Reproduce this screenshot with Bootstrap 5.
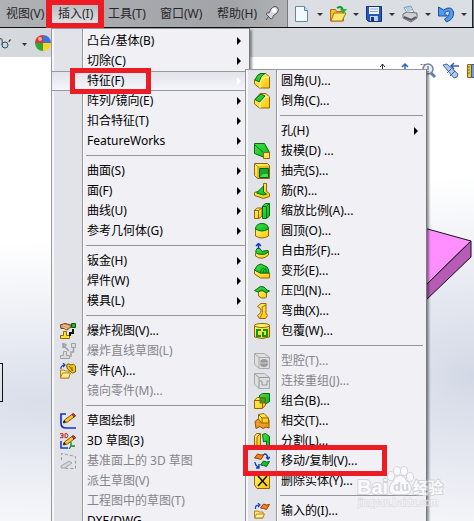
<!DOCTYPE html>
<html lang="zh-CN">
<head>
<meta charset="utf-8">
<meta name="viewport" content="width=device-width, initial-scale=1">
<title>插入 - 特征</title>
<link href="https://cdn.jsdelivr.net/npm/bootstrap@5.3.0/dist/css/bootstrap.min.css" rel="stylesheet">
<style>
body{font:12px/20px "Noto Sans","Noto Sans CJK SC",sans-serif;color:#000;background:#fff}
button{font:inherit;color:inherit}
.topbar{height:28px;background:#dbdee3;border-bottom:1px solid #111}
.menus{background:linear-gradient(90deg,#b0b1b5,#a2a3a7 80%,#b1b2b6);width:288px;height:27px;border-right:1px solid #77787c;color:#26262a}
.menus button{width:52px;height:27px;padding:0 0 0 6px;border:0;background:none;text-align:left;white-space:nowrap}
.menus .on{background:linear-gradient(#b9babe,#e2e3e7);height:20px;width:50px}
.menus .wide{width:57px}
.tool{width:36px;height:27px;border:0;background:none;padding:0}
.edge{width:3px}
.subbar{height:29px;background:#d5d8dc}
.view3d{background:radial-gradient(ellipse 400px 160px at 40px 345px,#d9deea,transparent),radial-gradient(ellipse 260px 200px at 100% 320px,#d3d8e6,transparent),#fff}
.view3d .tools{height:28px}
.model{right:0;top:168px}
.sheet{left:0;top:306px;width:3px;height:39px;border:1px solid #111;border-left:0}
.popup{background:linear-gradient(90deg,#f7f7fa 2px,#e2e3e8 2px,#e2e3e8 30px,#96979a 30px,#96979a 31px,#fff 31px,#fff 32px,#f1f0f5 32px);border:1px solid #96979b;border-right-color:#77787b;box-shadow:2px 2px 2px #0006;padding:2px 0}
.main-menu{left:51px;top:28px;width:199px}
.sub-menu{left:245px;top:69px;width:182px;padding-top:1px}
.cmd{display:flex;align-items:center;width:100%;height:20px;padding:0;border:0;background:none;white-space:nowrap;text-align:left}
.cmd:disabled{color:#85858a}
.cmd svg{width:16px;height:16px;margin:0 11px 0 8px;flex:none}
.cmd span{flex:1}
.cmd.plain{padding-left:35px}
.cmd.more::after{content:"";border:4px solid transparent;border-left:4px solid #000;border-right:0;margin-right:8px}
.cmd.hot{background:linear-gradient(#e1e2ea,#f6f6fb);box-shadow:inset 0 1px #98999f,inset 0 -1px #98999f}
.cmd.hot::after{border-left-color:#fff}
.rule{height:1px;margin:4px 3px 5px 34px;background:#949499;opacity:1;border:0}
.ring{border:5px solid #ed1c24;pointer-events:none}
.ring-a{left:46px;top:0;width:58px;height:28px;border-width:5px 6px}
.ring-b{left:70px;top:68px;width:81px;height:26px}
.ring-c{left:243px;top:445px;width:144px;height:31px}
.wm{left:357px;top:463px;opacity:.7;pointer-events:none}
</style>
</head>
<body class="vh-100 overflow-hidden position-relative d-flex flex-column">
<svg width="0" height="0" class="position-absolute" aria-hidden="true">
<defs>
<linearGradient id="gy" x2="1" y2="1"><stop stop-color="#fff675"/><stop offset="1" stop-color="#ffc400"/></linearGradient>
<linearGradient id="gg" x2="1" y2="1"><stop stop-color="#4be04b"/><stop offset="1" stop-color="#00b81c"/></linearGradient>
<symbol id="fillet" viewBox="0 0 16 16"><path d="M.5 7 6 .5h6L15.500 4v11H5.500L.5 11z" fill="url(#gy)" stroke="#94640a"/><path d="M1 7Q3 1 7 .5h4Q6 3 5.500 9z" fill="url(#gg)" stroke="#046b10"/><path d="M6 15V9Q8 4 15 4" fill="none" stroke="#fffbb0"/></symbol>
<symbol id="chamfer" viewBox="0 0 16 16"><path d="M.5 7 6 .5h6L15.500 4v11H5.500L.5 11z" fill="url(#gy)" stroke="#94640a"/><path d="M1 6.500 7 1l4 2-5.500 6z" fill="url(#gg)" stroke="#046b10"/><path d="M6 15v-5l6-6h3" fill="none" stroke="#fffbb0"/></symbol>
<symbol id="draft" viewBox="0 0 16 16"><path d="M.5.500h10l5 9v5h-5l-10-4z" fill="url(#gg)" stroke="#046b10"/><path d="m1 2 9 8" stroke="#067316" fill="none"/><path d="M9.500 9.500h6v6h-6z" fill="#ffe052" stroke="#94640a"/></symbol>
<symbol id="shell" viewBox="0 0 16 16"><path d="M.5.500h13l2 2v13H3.500l-3-3z" fill="url(#gy)" stroke="#94640a"/><path d="m1 1 3 3h11M4 4v11" fill="none" stroke="#c98e0c"/><path d="M5.500 5.500h9v9h-9z" fill="#18a52a" stroke="#065e10"/><path d="m6 14 3-3h5v3z" fill="#48e052"/></symbol>
<symbol id="rib" viewBox="0 0 16 16"><path d="M9.500.500h3v8l3 2v3l-6 2-9-3v-3l9-3z" fill="url(#gy)" stroke="#94640a"/><path d="m2.500 10 7-7v6l3 2-3 1z" fill="url(#gg)" stroke="#046b10"/></symbol>
<symbol id="scale" viewBox="0 0 16 16"><path d="m.5 7 3-2H8v8l-3 2.500H.5z" fill="url(#gy)" stroke="#94640a"/><path d="M4.500 15V7.500L8 5M1 7.500h3.500" fill="none" stroke="#94640a"/><path d="m8.500 3 3-2.500h4V13l-3 2.500h-4z" fill="url(#gg)" stroke="#046b10"/><path d="M12.500 15V3.500l3-3M9 3.500h3" fill="none" stroke="#046b10"/></symbol>
<symbol id="dome" viewBox="0 0 16 16"><path d="M1.500 5v8q6.500 4 13 0V5z" fill="url(#gy)" stroke="#94640a"/><path d="M1.500 6Q2 .5 8 .5T14.500 6Q8 10 1.500 6z" fill="url(#gg)" stroke="#046b10"/></symbol>
<symbol id="freeform" viewBox="0 0 16 16"><path d="M1.500 10v3q6.500 5 13-1V9z" fill="url(#gy)" stroke="#94640a"/><path d="M3 5.500h3l2 3q7-2 6.500 0-3 4-10 2.500Q0 10 3 5.500z" fill="url(#gg)" stroke="#046b10"/><path d="M4.500 6V1M2 3l2.500-2.500L7 3" fill="none" stroke="#1834d0" stroke-width="1.500"/></symbol>
<symbol id="deform" viewBox="0 0 16 16"><path d="m.5 7 6 3h9v5h-9l-6-4z" fill="url(#gy)" stroke="#94640a"/><path d="M.5 7Q3 1 7 1l6 3q2 2 2 6H6z" fill="url(#gg)" stroke="#046b10"/><path d="M6 10q1-5 4-5M9 10q0-3 3-5M12 10V6" fill="none" stroke="#07801a"/></symbol>
<symbol id="indent" viewBox="0 0 16 16"><path d="M4.500 8v5l3 2h4l1-1V8z" fill="url(#gy)" stroke="#94640a"/><path d="M.5 7.500 3 6q3-4 7-2l3 3 2.500 1L12 10 8 7 4 9z" fill="url(#gg)" stroke="#046b10"/></symbol>
<symbol id="flex" viewBox="0 0 16 16"><path d="M3.500 3.500 7 .5h5v6q-1 4 1.500 6l-2 3h-6l-2-3q5-3 3-7z" fill="url(#gy)" stroke="#94640a"/><path d="M8 4q2 6-2 11M12 2 8 4" fill="none" stroke="#a87508"/></symbol>
<symbol id="wrapf" viewBox="0 0 16 16"><path d="M.5 2v12q7.500 3 15 0V2z" fill="url(#gy)" stroke="#94640a"/><ellipse cx="8" cy="2.500" rx="7.500" ry="2" fill="#fff064" stroke="#94640a"/><path d="M7 7H3v6h4M9 7h4v6H9V9" fill="none" stroke="#079a1b" stroke-width="2"/></symbol>
<symbol id="cavity" viewBox="0 0 16 16"><path d="M.5.500h10l5 4v11h-10l-5-4z" fill="#dededf" stroke="#aaa"/><path d="M.5.500 5 4.500v11M5 4.500h10.500" fill="none" stroke="#aaa"/><circle cx="10" cy="10" r="4" fill="#999"/><path d="M5 10h10" stroke="#ccc"/></symbol>
<symbol id="joinr" viewBox="0 0 16 16"><path d="M.5.500h10l5 4v11h-10l-5-4z" fill="#dededf" stroke="#aaa"/><path d="M.5.500 5 4.500v11M5 4.500h10.500M5 8h3v4h5V8h2" fill="none" stroke="#999"/></symbol>
<symbol id="combine" viewBox="0 0 16 16"><path d="m5.500 2.500 3-2h7v8l-3 2h-7z" fill="url(#gg)" stroke="#046b10"/><path d="m.5 7 3-2.500h8V12l-3 3.500h-8z" fill="url(#gy)" stroke="#94640a"/><path d="M6 5h5v5H6z" fill="#27b52d" stroke="#58700a"/><path d="M1 7.500h7.500V15" fill="none" stroke="#94640a"/></symbol>
<symbol id="intersect" viewBox="0 0 16 16"><path d="M1 8.500 4 6l11 1v8l-3-1-3 1.500-3-2-4 2z" fill="#ed9b20" stroke="#9a4d00"/><path d="M4.500 1.500 10 .5 14.500 5v5h-7l-3-4z" fill="url(#gy)" stroke="#94640a"/><path d="m5 2 3 3v5M8 5h6" fill="none" stroke="#94640a"/></symbol>
<symbol id="split" viewBox="0 0 16 16"><path d="m.5 3 2-2.500h4V12l-2 3h-4z" fill="url(#gy)" stroke="#94640a"/><path d="M3 15V4l3-3" stroke="#94640a" fill="none"/><path d="m8.500 1.500 3-1 4 3v12h-3V8l-3 1z" fill="url(#gg)" stroke="#046b10"/></symbol>
<symbol id="movecopy" viewBox="0 0 16 16"><path d="m.5 5 3-4L7 2l3-.5L7 6.500l-3-1z" fill="#f58218" stroke="#964000"/><path d="m6.500 12 3-4 3 1 3-.5-3 5-3-1z" fill="#16bf2d" stroke="#046b10"/><path d="M10 1q4 0 4 5m-2-2 2 2 2-2M1 9q0 4 4 5M5 11v4H2" fill="none" stroke="#123ab8" stroke-width="1.300"/></symbol>
<symbol id="delbody" viewBox="0 0 16 16"><path d="M.5 3 3 .5h12.500v15H3L.5 12z" fill="url(#gy)" stroke="#94640a"/><path d="m4 3 9 10M13 3 4 13" stroke="#111" stroke-width="1.600"/></symbol>
<symbol id="imported" viewBox="0 0 16 16"><path d="M1.500 6Q1 2 5 2M4 0l2 2-2 2" fill="none" stroke="#1741bd" stroke-width="1.200"/><path d="m6.500 5 3-4 3 1 3-.5-3 5-3-1z" fill="#f58218" stroke="#964000"/><path d="M.5 15V8H4l1 1h4v6z" fill="#ffe98a" stroke="#b98213"/><path d="m.5 15 2-4h8l-2 4z" fill="#fff2ac" stroke="#b98213"/></symbol>
<symbol id="explode" viewBox="0 0 16 16"><path d="M.5 15.500v-3h3v-4h3v4h3v3z" fill="#ffe137" stroke="#94640a"/><path d="m0 2 5-1.500 6 1.500v2L7 7 4 5.500H1z" fill="#d99b62" stroke="#7c431b"/><path d="m3 2 6 2M3 4l4 2" stroke="#f3cb9b"/><path d="M11.500.500h4v4h-4z" fill="#16b52a" stroke="#075e13"/><path d="M13 6v4h-3v3" stroke="#111" stroke-width="2" fill="none"/></symbol>
<symbol id="explode-line" viewBox="0 0 16 16"><path d="M.5 15.500v-3h3v-4h3v4h3v3zM11.500.500h4v4h-4z" fill="#dcdcdf" stroke="#a0a0a4"/><path d="M13.500 5v4H11v5M3 2l6 6M3 0v4l3-2z" stroke="#a0a0a4" stroke-width="1.500" fill="none"/></symbol>
<symbol id="part" viewBox="0 0 16 16"><path d="M.8 6Q1 2 5 2M3 0l2 2-2 2" fill="none" stroke="#1741bd" stroke-width="1.200"/><path d="M6.500 3Q7 0 9 1l2 1q3-2 4.500 1v6l-3 1-5-4z" fill="#f2c816" stroke="#805b08"/><path d="m9 3 4 5M12 4v4" stroke="#805b08"/><path d="M.5 15V7H4l1 1h4v7z" fill="#ffe887" stroke="#b98213"/><path d="m.5 15 2-5h8l-2 5z" fill="#fff0a0" stroke="#b98213"/></symbol>
<symbol id="pencil" viewBox="0 0 16 16"><path d="m3.500 10 1-3 8-6 3 2-8 6z" fill="#ffc52b" stroke="#7b5516"/><path d="m12 1.500 1.500-1 2 2-1.500 1.500z" fill="#d8385b" stroke="#842537"/><path d="m3 10 1-3 2 2z" fill="#111"/></symbol>
<symbol id="sketch" viewBox="0 0 16 16"><path d="M6 1H1v9q0 5 5 5h10" fill="none" stroke="#1632bf" stroke-width="1.700"/><use href="#pencil" width="16" height="16"/></symbol>
<symbol id="sketch3" viewBox="0 0 16 16"><path d="M0 .7h3v4H0M1 2.700h2M5 .7h2q2 2 0 4H5z" stroke="#b9261c" fill="none"/><path d="M1 8v7h7" fill="none" stroke="#1840c0" stroke-width="1.600"/><path d="M11 9v4h4M11 13l-2 3" fill="none" stroke="#13842c" stroke-width="1.300"/><use href="#pencil" y="2" width="16" height="16"/></symbol>
<symbol id="sketchplane" viewBox="0 0 16 16"><path d="m1.500 7V.5l14 3v12h-10" fill="none" stroke="#999a9e" stroke-dasharray="3 2"/><path d="m1 13 8-5 3 2-7 5H1z" fill="#d6d6d9" stroke="#a3a3a6"/></symbol>
</defs>
</svg>

<header class="topbar d-flex flex-shrink-0">
<nav class="menus d-flex align-items-center flex-shrink-0" aria-label="菜单栏">
<button>视图(V)</button><button class="on">插入(I)</button><button>工具(T)</button><button class="wide">窗口(W)</button><button>帮助(H)</button>
<svg width="14" height="16" viewBox="0 0 14 16" class="ms-auto me-2 flex-shrink-0" aria-hidden="true"><path d="m1 14 3-4" stroke="#555"/><path d="M1 8q2-2 3-1l2-4q3-4 6-2 3 3 0 6l-4 3q1 2-2 3z" fill="#d5d7df" stroke="#55565d"/><circle cx="9" cy="4.500" r="2.500" fill="#fff"/></svg>
</nav>
<div class="d-flex ps-1">
<button class="tool" aria-label="新建"><svg width="36" height="27"><path d="M3.500 6.500h9l3 4v11h-12z" fill="#f2faff" stroke="#6686a5"/><path d="M12.500 6.500v4h3" fill="#b8d4ed" stroke="#6686a5"/><path d="M25 13h6l-3 3z" fill="#333"/></svg></button><button class="tool" aria-label="打开"><svg width="36" height="27"><path d="M2.500 21V9.500h5l1 2h7V21z" fill="#f7bd31" stroke="#b46e0e"/><path d="m3 21 3-8h12l-4 8z" fill="#ffe875" stroke="#b46e0e"/><path d="M9 8q5-3 6 3" fill="none" stroke="#1d9a25" stroke-width="2"/><path d="M12 9h7l-4 5z" fill="#23b82c"/><path d="M25 13h6l-3 3z" fill="#333"/></svg></button><button class="tool" aria-label="保存"><svg width="36" height="27"><path d="M2.500 6.500h15v15h-13l-2-2z" fill="#2755bd" stroke="#173478"/><path d="M5 7h10v7H5z" fill="#f2f6fd"/><path d="M6 9h8M6 11.500h8" stroke="#86a8d5"/><path d="M6 16h8v5H6z" fill="#bed1e9"/><path d="M7 17h3v4H7z" fill="#173478"/><path d="M25 13h6l-3 3z" fill="#333"/></svg></button><button class="tool" aria-label="打印"><svg width="36" height="27"><path d="M4 7.500 11 6l3 7H7z" fill="#fff" stroke="#719acb"/><path d="M6 8h5M7 10h5" stroke="#719acb"/><path d="m3 14 4-2 10 1v5l-6 4-8-4z" fill="#ced0d6" stroke="#6b6d75"/><path d="m4 17 7 3 5-3" fill="none" stroke="#55575f" stroke-width="2"/><path d="M25 13h6l-3 3z" fill="#333"/></svg></button><button class="tool" aria-label="撤消"><svg width="36" height="27"><path d="M2.500 7v9h9l-3-3q5-4 5 0 0 4-5 6l2 3q8-3 7-10-2-7-10-2z" fill="#4f9bed" stroke="#1b4c9f"/><path d="M25 13h6l-3 3z" fill="#333"/></svg></button>
</div>
<span class="edge border-start border-dark bg-secondary ms-auto"></span>
</header>
<div class="subbar d-flex flex-shrink-0 align-items-center">
<svg width="52" height="29" aria-hidden="true"><path d="M0 11q3-2 2 6M3 17q2-3 3 0m3-3q0-3 2-2" fill="none" stroke="#333"/><circle cx="5" cy="17" r="3" fill="#b8dcef" stroke="#445"/><path d="M22 15h5l-2.500 3z" fill="#333"/><path d="M43 15V7a8 8 0 0 0-8 8z" fill="#df352c"/><path d="M43 15V7a8 8 0 0 1 8 8z" fill="#3676df"/><path d="M43 15v8a8 8 0 0 1-8-8z" fill="#28a83a"/><path d="M43 15v8a8 8 0 0 0 8-8z" fill="#ffd21c"/><circle cx="40" cy="11" r="2" fill="#fff" opacity=".6"/></svg>
</div>
<main class="view3d flex-grow-1 position-relative">
<div class="tools d-flex justify-content-end">
<svg width="94" height="28" aria-hidden="true"><path d="M2.500 14V7M0 10l2.500-3L5 10" stroke="#333" fill="none"/><path d="M25 14V7M22 10l3-3 3 3" stroke="#3268b8" stroke-width="1.500" fill="none"/><path d="M40.500 7.500h10v9" fill="none" stroke="#777" stroke-dasharray="2 1"/><circle cx="48" cy="12" r="5" fill="#e6eefa" stroke="#7784a1" stroke-width="1.500"/><path d="m51 16 4 4" stroke="#5b7fb7" stroke-width="3"/><path d="M48 9v4m0 1v1" stroke="#555"/><path d="m63 8 4-1 11 10q0 4-4 4z" fill="#aac9ef" stroke="#486b9e"/><path d="m67 16 4-4M70 19l5-5" stroke="#3d5d91"/><path d="M79 9h-7m2-3-3 3 3 3" fill="none" stroke="#335fae" stroke-width="1.500"/><path d="M87.500 7.500h4v13h-4z" fill="#f3c92d" stroke="#8b671d"/><path d="M91.500 7.500H95v13h-3.500z" fill="#6b9dde" stroke="#355894"/><path d="M88 10h2m-2 3h2m-2 3h2" stroke="#8b671d"/></svg>
</div>
<svg class="model position-absolute" width="50" height="80" viewBox="0 0 50 80" aria-hidden="true"><path d="M0 3 47 16 0 62z" fill="#ff8eff" stroke="#111"/><path d="M47 16v16L0 77V62z" fill="#b75bb7" stroke="#111"/></svg>
<div class="sheet position-absolute"></div>
</main>

<div class="popup main-menu position-absolute" role="menu" aria-label="插入">
<button class="cmd plain more"><span>凸台/基体(B)</span></button>
<button class="cmd plain more"><span>切除(C)</span></button>
<button class="cmd plain more hot"><span>特征(F)</span></button>
<button class="cmd plain more"><span>阵列/镜向(E)</span></button>
<button class="cmd plain more"><span>扣合特征(T)</span></button>
<button class="cmd plain more"><span>FeatureWorks</span></button>
<hr class="rule">
<button class="cmd plain more"><span>曲面(S)</span></button>
<button class="cmd plain more"><span>面(F)</span></button>
<button class="cmd plain more"><span>曲线(U)</span></button>
<button class="cmd plain more"><span>参考几何体(G)</span></button>
<hr class="rule">
<button class="cmd plain more"><span>钣金(H)</span></button>
<button class="cmd plain more"><span>焊件(W)</span></button>
<button class="cmd plain more"><span>模具(L)</span></button>
<hr class="rule">
<button class="cmd"><svg><use href="#explode"/></svg><span>爆炸视图(V)...</span></button>
<button class="cmd" disabled><svg><use href="#explode-line"/></svg><span>爆炸直线草图(L)</span></button>
<button class="cmd"><svg><use href="#part"/></svg><span>零件(A)...</span></button>
<button class="cmd plain" disabled><span>镜向零件(M)...</span></button>
<hr class="rule">
<button class="cmd"><svg><use href="#sketch"/></svg><span>草图绘制</span></button>
<button class="cmd"><svg><use href="#sketch3"/></svg><span>3D 草图(3)</span></button>
<button class="cmd" disabled><svg><use href="#sketchplane"/></svg><span>基准面上的 3D 草图</span></button>
<button class="cmd plain" disabled><span>派生草图(V)</span></button>
<button class="cmd plain" disabled><span>工程图中的草图(T)</span></button>
<button class="cmd plain"><span>DXF/DWG...</span></button>
</div>

<div class="popup sub-menu position-absolute" role="menu" aria-label="特征">
<button class="cmd"><svg><use href="#fillet"/></svg><span>圆角(U)...</span></button>
<button class="cmd"><svg><use href="#chamfer"/></svg><span>倒角(C)...</span></button>
<hr class="rule">
<button class="cmd plain more"><span>孔(H)</span></button>
<button class="cmd"><svg><use href="#draft"/></svg><span>拔模(D) ...</span></button>
<button class="cmd"><svg><use href="#shell"/></svg><span>抽壳(S)...</span></button>
<button class="cmd"><svg><use href="#rib"/></svg><span>筋(R)...</span></button>
<button class="cmd"><svg><use href="#scale"/></svg><span>缩放比例(A)...</span></button>
<button class="cmd"><svg><use href="#dome"/></svg><span>圆顶(O)...</span></button>
<button class="cmd"><svg><use href="#freeform"/></svg><span>自由形(F)...</span></button>
<button class="cmd"><svg><use href="#deform"/></svg><span>变形(E)...</span></button>
<button class="cmd"><svg><use href="#indent"/></svg><span>压凹(N)...</span></button>
<button class="cmd"><svg><use href="#flex"/></svg><span>弯曲(X)...</span></button>
<button class="cmd"><svg><use href="#wrapf"/></svg><span>包覆(W)...</span></button>
<hr class="rule">
<button class="cmd" disabled><svg><use href="#cavity"/></svg><span>型腔(T)...</span></button>
<button class="cmd" disabled><svg><use href="#joinr"/></svg><span>连接重组(J)...</span></button>
<button class="cmd"><svg><use href="#combine"/></svg><span>组合(B)...</span></button>
<button class="cmd"><svg><use href="#intersect"/></svg><span>相交(T)...</span></button>
<button class="cmd"><svg><use href="#split"/></svg><span>分割(L)...</span></button>
<button class="cmd"><svg><use href="#movecopy"/></svg><span>移动/复制(V)...</span></button>
<button class="cmd"><svg><use href="#delbody"/></svg><span>删除实体(Y)...</span></button>
<hr class="rule">
<button class="cmd"><svg><use href="#imported"/></svg><span>输入的(I)...</span></button>
</div>

<div class="ring ring-a position-absolute"></div>
<div class="ring ring-b position-absolute"></div>
<div class="ring ring-c position-absolute"></div>
<svg class="wm position-absolute" width="92" height="46" viewBox="0 0 92 46" role="img" aria-label="Baidu 经验">
<g fill="#fff" stroke="#c9cad1" stroke-width="2" paint-order="stroke"><text x="0" y="31" font-family="Liberation Sans" font-size="20" font-weight="bold">Bai</text><text x="56" y="30" font-family="Noto Sans CJK SC" font-weight="bold" font-size="15">经验</text><text x="1" y="43" font-family="Liberation Sans" font-size="10" stroke-width="1">jingyan.baidu.com</text><ellipse cx="34" cy="13" rx="3" ry="4"/><ellipse cx="40" cy="8" rx="3" ry="4"/><ellipse cx="47" cy="8" rx="3" ry="4"/><ellipse cx="53" cy="14" rx="3" ry="4"/><path d="M43 13q4 0 6 5 7 5 4 10-1 4-9 3-10 1-11-3-1-5 4-10 2-5 6-5z"/></g><text x="36" y="28" font-family="Liberation Sans" font-size="13" font-weight="bold" fill="#c9cad1">du</text>
</svg>
<script src="https://cdn.jsdelivr.net/npm/bootstrap@5.3.0/dist/js/bootstrap.bundle.min.js"></script>
</body>
</html>
